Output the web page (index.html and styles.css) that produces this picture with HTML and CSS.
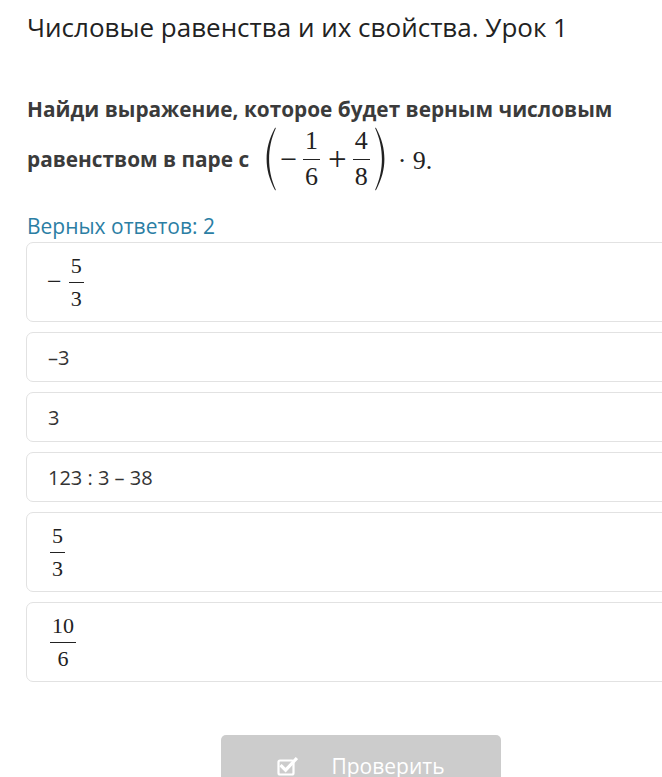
FILE: index.html
```html
<!DOCTYPE html>
<html lang="ru">
<head>
<meta charset="utf-8">
<title>Числовые равенства</title>
<link rel="stylesheet" href="styles.css">
</head>
<body>
<div class="page">
  <h1 class="title">Числовые равенства и их свойства. Урок 1</h1>
  <div class="question">
    <div class="q-line">Найди выражение, которое будет верным числовым</div>
    <div class="q-line q-math">
      <span>равенством в паре с</span>
      <span class="math expr">
        <svg class="paren" width="10" height="64" viewBox="0 0 10 64" aria-hidden="true">
          <path d="M9.2 0.6 C3 12 0.6 22 0.6 32 C0.6 42 3 52 9.2 63.4 L9.8 62.8 C5 52 3.1 42 3.1 32 C3.1 22 5 12 9.8 1.2 Z" fill="#222"/>
        </svg>
        <span class="op minus">−</span>
        <span class="frac"><span class="num">1</span><span class="den">6</span></span>
        <span class="op plus">+</span>
        <span class="frac"><span class="num">4</span><span class="den">8</span></span>
        <svg class="paren rp" width="10" height="64" viewBox="0 0 10 64" aria-hidden="true">
          <path d="M0.8 0.6 C7 12 9.4 22 9.4 32 C9.4 42 7 52 0.8 63.4 L0.2 62.8 C5 52 6.9 42 6.9 32 C6.9 22 5 12 0.2 1.2 Z" fill="#222"/>
        </svg>
        <span class="tail">· 9.</span>
      </span>
    </div>
  </div>
  <div class="hint">Верных ответов: 2</div>
  <div class="answers">
    <div class="card card-tall">
      <span class="math"><span class="op sm">−</span><span class="frac"><span class="num">5</span><span class="den">3</span></span></span>
    </div>
    <div class="card">–3</div>
    <div class="card">3</div>
    <div class="card">123 : 3 – 38</div>
    <div class="card card-tall">
      <span class="math"><span class="frac lead"><span class="num">5</span><span class="den">3</span></span></span>
    </div>
    <div class="card card-tall">
      <span class="math"><span class="frac lead"><span class="num">10</span><span class="den">6</span></span></span>
    </div>
  </div>
  <div class="actions">
    <button class="check-btn" type="button">
      <svg class="check-icon" width="21" height="20" viewBox="0 0 21 20" aria-hidden="true">
        <rect x="1.5" y="4.5" width="15" height="14" rx="1.5" fill="none" stroke="#fff" stroke-width="2.2"/>
        <path d="M4.6 10.2 L8.6 14.2 L18.8 3.2" fill="none" stroke="#fff" stroke-width="3.2" stroke-linecap="square"/>
      </svg>
      <span>Проверить</span>
    </button>
  </div>
</div>
</body>
</html>
```

FILE: styles.css
```css
html, body {
  margin: 0;
  padding: 0;
  background: #fff;
  overflow: hidden;
}
body {
  font-family: "Open Sans", "Liberation Sans", sans-serif;
  color: #333;
}
.page {
  width: 670px;
  padding: 0 0 0 26px;
}
.title {
  margin: 0;
  padding: 9px 0 0 1px;
  font-size: 26px;
  font-weight: 400;
  line-height: 36px;
  color: #222;
}
.question {
  margin-top: 50px;
  padding-left: 1px;
  font-size: 20.8px;
  font-weight: 700;
  color: #3b3b3b;
}
.q-line {
  line-height: 28px;
}
.q-math {
  display: flex;
  align-items: center;
  margin-top: 4px;
  height: 64px;
}
.math {
  font-family: "Liberation Serif", "DejaVu Serif", serif;
  font-weight: 400;
  color: #222;
  display: inline-flex;
  align-items: center;
}
.expr {
  margin-left: 17px;
  font-size: 26px;
}
.paren {
  display: block;
  flex: none;
}
.rp {
  margin-left: 5px;
}
.op {
  font-size: 26px;
  line-height: 26px;
}
.minus {
  font-size: 30px;
  line-height: 26px;
  margin: 0 6px 0 4px;
}
.plus {
  font-size: 33px;
  line-height: 26px;
  margin: 0 6px 0 8px;
}
.frac {
  display: inline-flex;
  flex-direction: column;
  align-items: center;
  font-size: 26px;
  line-height: 26px;
}
.num {
  padding: 0 2px 5px;
  border-bottom: 1px solid #222;
}
.den {
  padding-top: 4px;
}
.tail {
  margin-left: 13px;
  font-size: 26px;
  line-height: 26px;
  position: relative;
  top: 2px;
}
.hint {
  margin-top: 22px;
  padding-left: 1px;
  font-size: 21px;
  line-height: 26px;
  color: #2b7ea4;
}
.answers {
  display: flex;
  flex-direction: column;
  gap: 10px;
  margin-top: 3px;
}
.card {
  border: 1px solid #e2e2e2;
  border-radius: 7px;
  height: 48px;
  padding: 0 21px;
  display: flex;
  align-items: center;
  font-size: 20px;
  color: #333;
}
.card-tall {
  height: 78px;
}
.card .op.sm {
  font-size: 26px;
  line-height: 22px;
  margin: 0 7px 0 -1px;
}
.card .frac {
  font-size: 22px;
  line-height: 22px;
}
.card .num {
  padding: 0 2px 5px;
}
.card .den {
  padding-top: 5px;
}
.card .frac.lead {
  margin-left: 2px;
}
.actions {
  display: flex;
  justify-content: center;
  margin-top: 53px;
}
.check-btn {
  width: 280px;
  height: 62px;
  border: none;
  border-radius: 5px;
  background: #cccccc;
  color: #fff;
  font-family: "Open Sans", "Liberation Sans", sans-serif;
  font-size: 21px;
  display: flex;
  align-items: center;
  justify-content: center;
  gap: 33px;
  padding: 0;
}
.check-icon {
  display: block;
}
```
